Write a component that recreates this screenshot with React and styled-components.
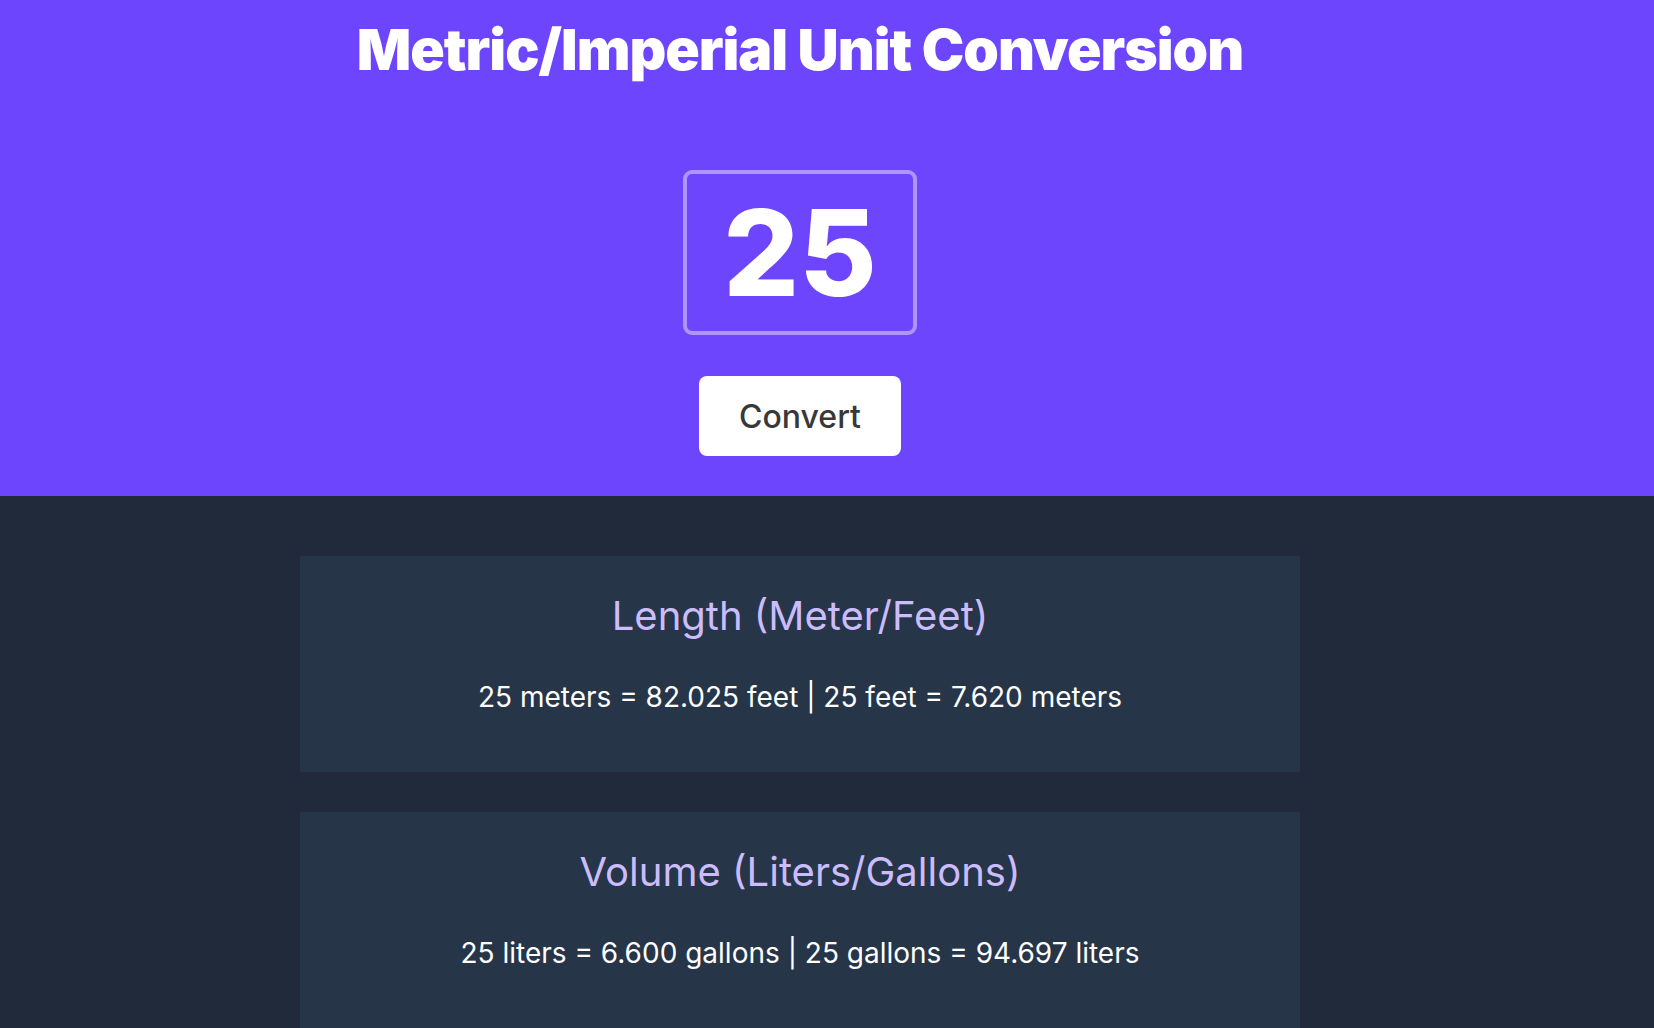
import React, { useState } from 'react';
import styled, { createGlobalStyle } from 'styled-components';

const GlobalStyle = createGlobalStyle`
  html, body {
    margin: 0;
    padding: 0;
    background: #212a3a;
    font-family: 'Inter', 'Liberation Sans', sans-serif;
  }
  * { box-sizing: border-box; }
`;

const Header = styled.header`
  background: #6c45fd;
  padding: 15px 0 40px;
`;

const Inner = styled.div`
  width: 1600px;
  display: flex;
  flex-direction: column;
  align-items: center;
`;

const Title = styled.h1`
  margin: 0 0 85px;
  color: #ffffff;
  font-size: 57px;
  font-weight: 900;
  line-height: 70px;
  letter-spacing: -1px;
`;

const NumberInput = styled.input`
  width: 234px;
  height: 165px;
  background: transparent;
  border: 4px solid #b194fb;
  border-radius: 9px;
  color: #ffffff;
  font-family: 'Inter', 'Liberation Sans', sans-serif;
  font-size: 119px;
  font-weight: 800;
  text-align: center;
  outline: none;
  padding: 0;
`;

const ConvertButton = styled.button`
  margin-top: 41px;
  width: 202px;
  height: 80px;
  background: #ffffff;
  border: none;
  border-radius: 8px;
  color: #383838;
  font-family: 'Inter', 'Liberation Sans', sans-serif;
  font-size: 32px;
  font-weight: 500;
  cursor: pointer;
`;

const Results = styled.main`
  padding: 60px 0 40px;
`;

const Cards = styled.div`
  width: 1600px;
  display: flex;
  flex-direction: column;
  align-items: center;
  gap: 40px;
`;

const Card = styled.section`
  width: 1000px;
  background: #263548;
  padding: 36px 20px 58px;
  text-align: center;
`;

const CardTitle = styled.h2`
  margin: 0 0 40px;
  color: #cbbcfc;
  font-size: 40px;
  font-weight: 400;
  line-height: 48px;
`;

const CardText = styled.p`
  margin: 0;
  color: #ffffff;
  font-size: 28px;
  line-height: 34px;
`;

const fmt = (n) => n.toFixed(3);

export default function App() {
  const [value, setValue] = useState('25');
  const n = parseFloat(value) || 0;

  const rows = [
    {
      title: 'Length (Meter/Feet)',
      text: `${value} meters = ${fmt(n * 3.281)} feet | ${value} feet = ${fmt(n / 3.281)} meters`,
    },
    {
      title: 'Volume (Liters/Gallons)',
      text: `${value} liters = ${fmt(n * 0.264)} gallons | ${value} gallons = ${fmt(n * 3.78788)} liters`,
    },
  ];

  return (
    <>
      <GlobalStyle />
      <Header>
        <Inner>
          <Title>Metric/Imperial Unit Conversion</Title>
          <NumberInput
            type="text"
            value={value}
            onChange={(e) => setValue(e.target.value)}
          />
          <ConvertButton type="button">Convert</ConvertButton>
        </Inner>
      </Header>
      <Results>
        <Cards>
          {rows.map((r) => (
            <Card key={r.title}>
              <CardTitle>{r.title}</CardTitle>
              <CardText>{r.text}</CardText>
            </Card>
          ))}
        </Cards>
      </Results>
    </>
  );
}
